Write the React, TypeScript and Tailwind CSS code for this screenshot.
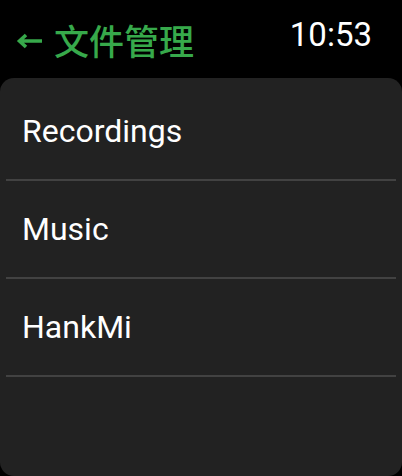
import React from "react";

export default function App() {
  const items = ["Recordings", "Music", "HankMi"];
  return (
    <div className="w-[402px] h-[476px] bg-black overflow-hidden flex flex-col" style={{ fontFamily: "Roboto, 'Noto Sans CJK SC', sans-serif" }}>
      <div className="h-[78px] flex items-start shrink-0">
        <div className="flex items-center pl-[16px] pt-[21px]">
          <svg width="28" height="16" viewBox="0 0 28 16" className="mt-[2px]">
            <path d="M26 8H4M10 2L3.5 8L10 14" stroke="#37a94b" strokeWidth="3.6" fill="none" strokeLinecap="butt" strokeLinejoin="miter" />
          </svg>
          <span className="ml-[10px] text-[35px] leading-[38px] font-medium text-[#37a94b]" style={{ fontFamily: "'Noto Sans CJK SC', sans-serif" }}>文件管理</span>
        </div>
        <div className="ml-auto pr-[30px] pt-[15px] text-[33px] leading-[40px] text-white" style={{ fontFamily: "Roboto, sans-serif" }}>10:53</div>
      </div>
      <div className="flex-1 bg-[#222222] rounded-[14px] pt-[5px]">
        {items.map((t) => (
          <div key={t}>
            <div className="h-[96px] flex items-center pl-[22px] text-[32px] text-white">{t}</div>
            <div className="mx-[6px] h-[2px] bg-[#424242]" />
          </div>
        ))}
      </div>
    </div>
  );
}
